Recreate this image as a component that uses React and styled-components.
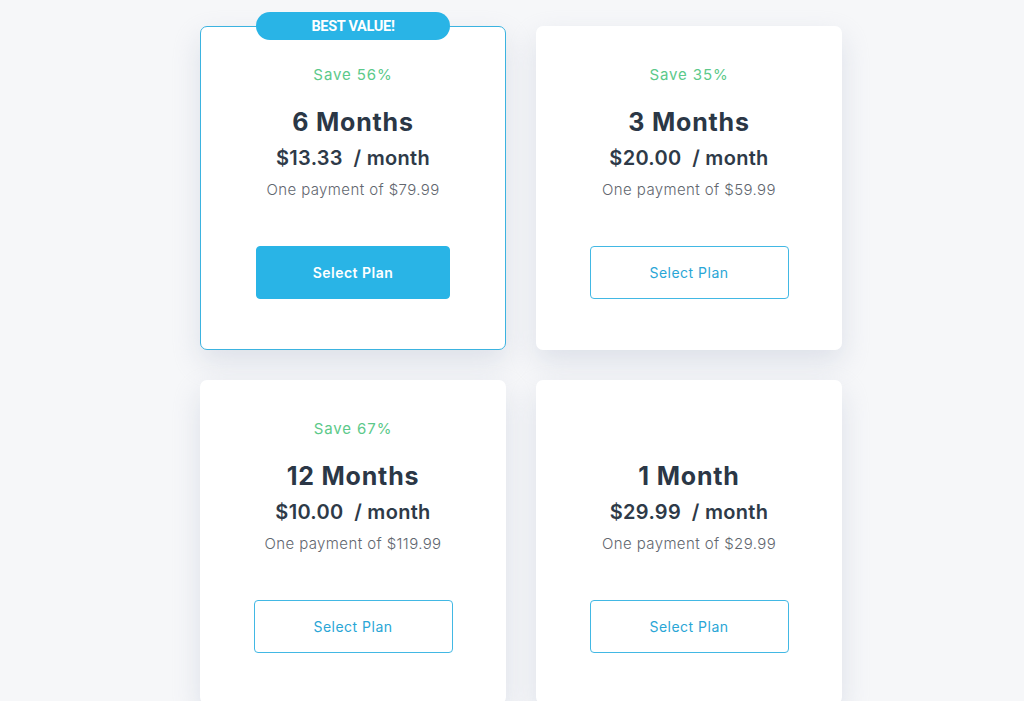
import React from "react";
import styled, { createGlobalStyle } from "styled-components";

const Global = createGlobalStyle`
  html, body { margin: 0; padding: 0; background: #f6f7f9; }
  body { font-family: "Inter", "Open Sans", sans-serif; overflow: hidden; }
`;

const Page = styled.div`
  padding: 26px 0 0 200px;
  min-height: 701px;
  box-sizing: border-box;
`;

const Grid = styled.div`
  display: grid;
  grid-template-columns: repeat(2, 306px);
  column-gap: 30px;
  row-gap: 30px;
`;

const Card = styled.div`
  position: relative;
  box-sizing: border-box;
  height: 324px;
  background: #fff;
  border-radius: 7px;
  border: 1px solid ${(p) => (p.$featured ? "#3bb3e0" : "transparent")};
  box-shadow: 0 12px 28px rgba(190, 198, 212, 0.45);
  display: flex;
  flex-direction: column;
  align-items: center;
  padding-top: 38px;
`;

const Badge = styled.div`
  position: absolute;
  top: -15px;
  left: 50%;
  transform: translateX(-50%);
  width: 194px;
  height: 28px;
  border-radius: 14px;
  background: #29b4e6;
  color: #fff;
  font-family: "Roboto", sans-serif;
  font-weight: 700;
  font-size: 14.5px;
  letter-spacing: -0.3px;
  display: flex;
  align-items: center;
  justify-content: center;
`;

const Save = styled.div`
  height: 20px;
  color: #5cc98a;
  font-size: 15px;
  line-height: 20px;
  letter-spacing: 0.9px;
`;

const Title = styled.div`
  margin-top: 22px;
  color: #2b3746;
  font-size: 25px;
  font-weight: 700;
  line-height: 30px;
  letter-spacing: 0.8px;
`;

const Price = styled.div`
  margin-top: 9px;
  color: #2e3a48;
  font-size: 20px;
  font-weight: 600;
  line-height: 24px;
  letter-spacing: 0.3px;
  white-space: pre;
`;

const Payment = styled.div`
  margin-top: 11px;
  color: #62676f;
  font-size: 15px;
  font-weight: 300;
  line-height: 18px;
  letter-spacing: 0.4px;
`;

const Button = styled.button`
  margin-top: 47px;
  box-sizing: border-box;
  width: ${(p) => (p.$filled ? "194px" : "199px")};
  height: 53px;
  border-radius: 4px;
  border: 1px solid ${(p) => (p.$filled ? "#29b4e6" : "#42b8e4")};
  background: ${(p) => (p.$filled ? "#29b4e6" : "#fff")};
  color: ${(p) => (p.$filled ? "#fff" : "#2aa6d6")};
  font-family: "Inter", sans-serif;
  font-size: 14px;
  letter-spacing: 0.5px;
  font-weight: ${(p) => (p.$filled ? 600 : 400)};
  cursor: pointer;
`;

const plans = [
  { save: "Save 56%", title: "6 Months", price: "$13.33  / month", pay: "One payment of $79.99", featured: true },
  { save: "Save 35%", title: "3 Months", price: "$20.00  / month", pay: "One payment of $59.99" },
  { save: "Save 67%", title: "12 Months", price: "$10.00  / month", pay: "One payment of $119.99" },
  { save: "", title: "1 Month", price: "$29.99  / month", pay: "One payment of $29.99" },
];

export default function App() {
  return (
    <Page>
      <Global />
      <Grid>
        {plans.map((p) => (
          <Card key={p.title} $featured={p.featured}>
            {p.featured && <Badge>BEST VALUE!</Badge>}
            <Save>{p.save}</Save>
            <Title>{p.title}</Title>
            <Price>{p.price}</Price>
            <Payment>{p.pay}</Payment>
            <Button $filled={p.featured}>Select Plan</Button>
          </Card>
        ))}
      </Grid>
    </Page>
  );
}
